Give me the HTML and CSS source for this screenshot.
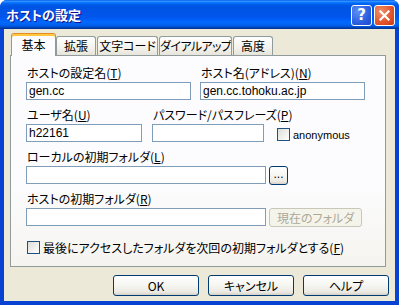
FILE: index.html
```html
<!DOCTYPE html>
<html lang="ja">
<head>
    <meta charset="UTF-8">
    <title>ホストの設定</title>
    <link rel="stylesheet" href="styles.css">
</head>
<body>
    <div class="window">
        <div class="titlebar">
            <span class="title">ホストの設定</span>
            <div class="caption-btns">
                <span class="cap-btn help">?</span>
                <span class="cap-btn close">
                    <svg width="11" height="11" viewBox="0 0 11 11">
                        <path d="M1.5 1.5 L9.5 9.5 M9.5 1.5 L1.5 9.5" stroke="#fff" stroke-width="2.2" stroke-linecap="square"/>
                    </svg>
                </span>
            </div>
        </div>

        <div class="client">
            <!-- タブ -->
            <div class="tabs">
                <div class="tab active">基本</div>
                <div class="tab t-kakucho">拡張</div>
                <div class="tab t-moji">文字コード</div>
                <div class="tab t-dial">ダイアルアップ</div>
                <div class="tab t-kodo">高度</div>
            </div>

            <div class="panel">
                <div class="row">
                    <div class="field w165">
                        <label>ホストの設定名(<u>T</u>)</label>
                        <div class="input">gen.cc</div>
                    </div>
                    <div class="field w165">
                        <label>ホスト名(アドレス)(<u>N</u>)</label>
                        <div class="input">gen.cc.tohoku.ac.jp</div>
                    </div>
                </div>

                <div class="row gap10">
                    <div class="field w116">
                        <label>ユーザ名(<u>U</u>)</label>
                        <div class="input">h22161</div>
                    </div>
                    <div class="field w112">
                        <label>パスワード/パスフレーズ(<u>P</u>)</label>
                        <div class="input"></div>
                    </div>
                    <div class="check anon">
                        <span class="box"></span>
                        <span class="latin">anonymous</span>
                    </div>
                </div>

                <div class="row gap3">
                    <div class="field w240">
                        <label>ローカルの初期フォルダ(<u>L</u>)</label>
                        <div class="input"></div>
                    </div>
                    <div class="btn small">...</div>
                </div>

                <div class="row gap3">
                    <div class="field w240">
                        <label>ホストの初期フォルダ(<u>R</u>)</label>
                        <div class="input"></div>
                    </div>
                    <div class="btn current disabled">現在のフォルダ</div>
                </div>

                <div class="check last">
                    <span class="box"></span>
                    <span>最後にアクセスしたフォルダを次回の初期フォルダとする(<u>F</u>)</span>
                </div>
            </div>

            <!-- 下のボタン -->
            <div class="buttons">
                <div class="btn dlg">OK</div>
                <div class="btn dlg">キャンセル</div>
                <div class="btn dlg">ヘルプ</div>
            </div>
        </div>
    </div>
</body>
</html>
```

FILE: styles.css
```css
body {
    margin: 0;
    background: #fff;
    font-family: "Noto Sans CJK JP", sans-serif;
    font-size: 12px;
    font-feature-settings: "palt";
    color: #000;
}
.window {
    width: 399px;
    height: 305px;
    box-sizing: border-box;
    display: flex;
    flex-direction: column;
    background: #0842d2;
    border-radius: 7px 7px 0 0;
    overflow: hidden;
}
.titlebar {
    height: 29px;
    flex: none;
    display: flex;
    align-items: center;
    justify-content: space-between;
    padding: 0 4px 0 6px;
    background: linear-gradient(to bottom, #0058ee 0%, #3593ff 4%, #288eff 6%, #127dff 8%, #036ffc 10%, #0262ee 14%, #0057e5 20%, #0054e3 24%, #0055eb 56%, #005bf5 66%, #026afe 76%, #0062ef 86%, #0052d6 92%, #0040ab 96%, #003092 100%);
}
.title {
    color: #fff;
    font-weight: bold;
    font-size: 13px;
    line-height: 16px;
    text-shadow: 1px 1px #0f1089;
    margin-top: 1px;
}
.caption-btns {
    display: flex;
    gap: 2px;
    margin-top: 2px;
}
.cap-btn {
    width: 21px;
    height: 21px;
    box-sizing: border-box;
    border: 1px solid #fff;
    border-radius: 3px;
    display: flex;
    align-items: center;
    justify-content: center;
    color: #fff;
}
.cap-btn.help {
    background: radial-gradient(circle at 30% 30%, #5d8ff5, #2a5fe0 60%, #1c47c8);
    font-family: "DejaVu Sans", sans-serif;
    font-weight: bold;
    font-size: 15px;
    line-height: 19px;
}
.cap-btn.close {
    background: radial-gradient(circle at 30% 30%, #f0906a, #e0532b 60%, #c83a14);
}
.client {
    flex: 1;
    margin: 0 4px 4px;
    background: #ece9d8;
    padding: 4px 0 0 6px;
}
.tabs {
    display: flex;
    align-items: flex-end;
    height: 22px;
    padding-left: 1px;
    gap: 1px;
}
.tab {
    height: 19px;
    box-sizing: border-box;
    border: 1px solid #919b9c;
    border-bottom: none;
    border-radius: 3px 3px 0 0;
    background: linear-gradient(#fff, #f3f2ec 60%, #e6e4da);
    text-align: center;
    line-height: 18px;
    white-space: nowrap;
    overflow: hidden;
}
.tab.active {
    width: 45px;
    height: 23px;
    margin-bottom: -1px;
    margin-right: -1px;
    position: relative;
    z-index: 1;
    background: #fcfcfe;
    border-top-color: #e68b2c;
    box-shadow: inset 0 2px #ffc83c;
    line-height: 22px;
}
.t-kakucho { width: 40px; }
.t-moji { width: 61px; }
.t-dial { width: 73px; letter-spacing: -0.6px; }
.t-kodo { width: 40px; }
.panel {
    width: 376px;
    height: 212px;
    box-sizing: border-box;
    border: 1px solid #919b9c;
    background: linear-gradient(#fcfcfe 60%, #f5f4ef);
    padding: 9px 0 0 15px;
}
.row {
    display: flex;
    align-items: flex-end;
    gap: 9px;
    margin-bottom: 7px;
}
.row.gap10 { gap: 10px; }
.row.gap3 { gap: 3px; }
.field {
    display: flex;
    flex-direction: column;
}
.field label {
    height: 15px;
    line-height: 15px;
    margin: 0 0 2px 1px;
    white-space: nowrap;
}
.w165 { width: 165px; }
.w116 { width: 116px; }
.w112 { width: 112px; }
.w240 { width: 240px; }
.input {
    height: 18px;
    box-sizing: border-box;
    border: 1px solid #7f9db9;
    background: #fff;
    padding: 0 2px;
    line-height: 16px;
    font-family: "Liberation Sans", sans-serif;
}
.check {
    display: flex;
    align-items: center;
    gap: 3px;
    white-space: nowrap;
}
.check .box {
    width: 13px;
    height: 13px;
    box-sizing: border-box;
    border: 1px solid #1c5180;
    background: linear-gradient(135deg, #dcdcd7, #fff);
}
.check.anon {
    margin: 0 0 1px 3px;
}
.latin {
    font-family: "Liberation Sans", sans-serif;
    font-size: 11px;
}
.check.last {
    margin: 14px 0 0 1px;
    height: 15px;
}
.btn {
    box-sizing: border-box;
    border: 1px solid #003c74;
    border-radius: 3px;
    background: linear-gradient(#fff, #f5f5f1 50%, #ebe9e2 85%, #d6d0c5);
    text-align: center;
    white-space: nowrap;
}
.btn.small {
    width: 19px;
    height: 19px;
    line-height: 15px;
    margin-bottom: -1px;
    font-family: "Liberation Sans", sans-serif;
}
.btn.disabled {
    border-color: #c9c7ba;
    background: #f5f4ea;
    color: #aca899;
}
.btn.current {
    width: 93px;
    height: 19px;
    line-height: 17px;
    margin-bottom: -1px;
}
.buttons {
    display: flex;
    justify-content: flex-end;
    gap: 9px;
    margin: 8px 6px 0 0;
}
.btn.dlg {
    width: 86px;
    height: 21px;
    line-height: 19px;
}
```
